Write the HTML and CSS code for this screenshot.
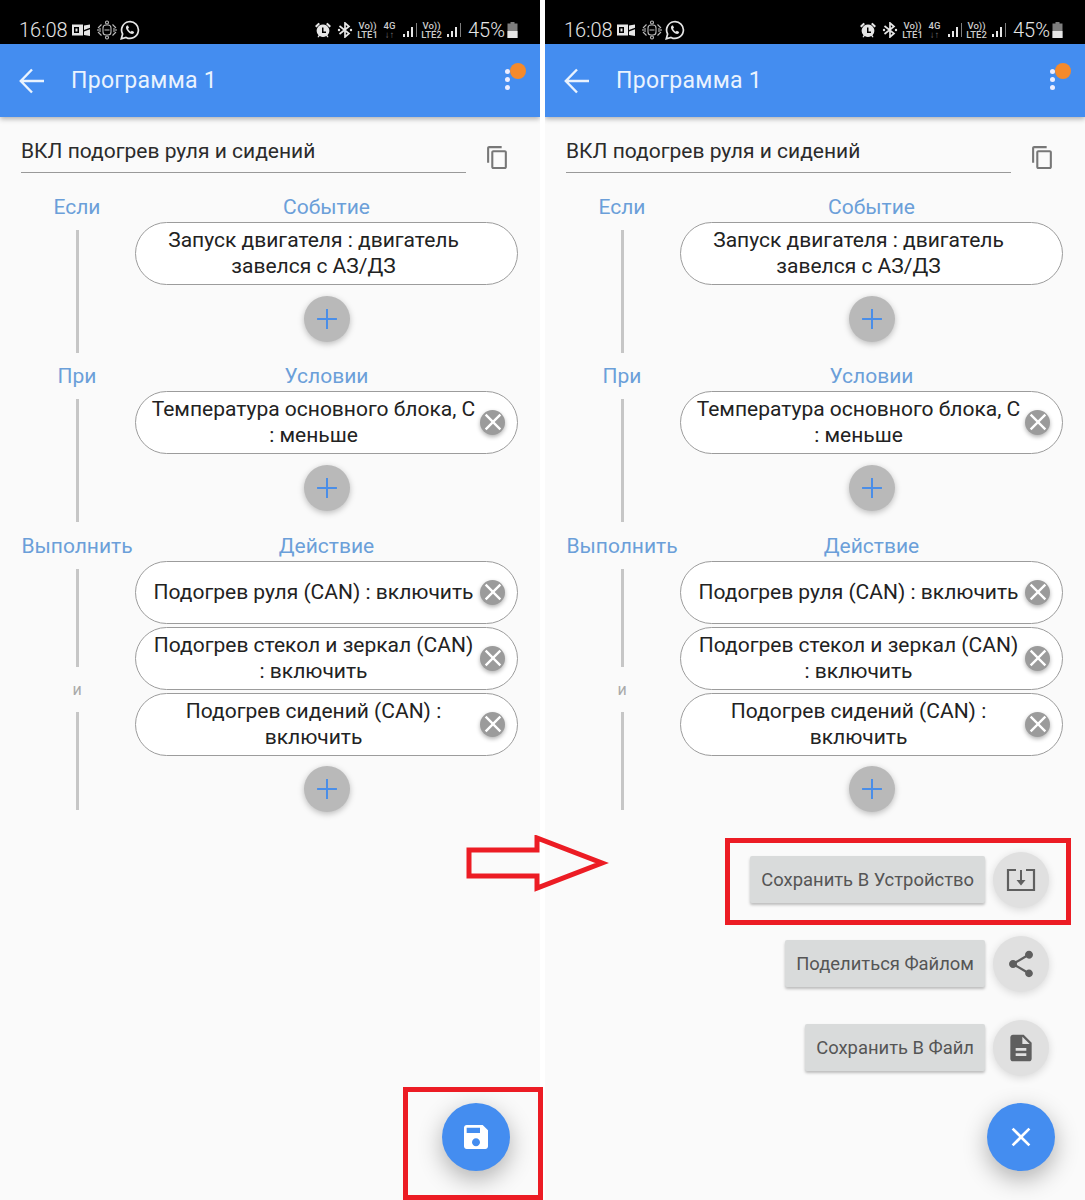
FILE: index.html
```html
<!DOCTYPE html>
<html lang="ru">
<head>
    <meta charset="UTF-8">
    <title>Программа 1</title>
    <link rel="stylesheet" href="styles.css">
</head>
<body>
    <svg class="sprite" aria-hidden="true">
        <symbol id="i-back" viewBox="0 0 26 26"><path d="M25 13H2M13 1.500 1.800 13 13 24.500" fill="none" stroke="currentColor" stroke-width="2.400"/></symbol>
        <symbol id="i-copy" viewBox="0 0 24 24"><path d="M16 1H4c-1.100 0-2 .9-2 2v14h2V3h12V1zm3 4H8c-1.100 0-2 .9-2 2v14c0 1.100.9 2 2 2h11c1.100 0 2-.9 2-2V7c0-1.100-.9-2-2-2zm0 16H8V7h11v14z"/></symbol>
        <symbol id="i-add" viewBox="0 0 24 24"><path d="M19 12.700h-6.300V19h-1.400v-6.300H5v-1.400h6.300V5h1.400v6.300H19z"/></symbol>
        <symbol id="i-close" viewBox="0 0 24 24"><path d="M19 6.410 17.590 5 12 10.590 6.410 5 5 6.410 10.590 12 5 17.590 6.410 19 12 13.410 17.590 19 19 17.590 13.410 12z"/></symbol>
        <symbol id="i-save" viewBox="0 0 24 24"><path d="M17 3H5c-1.110 0-2 .9-2 2v14c0 1.100.89 2 2 2h14c1.100 0 2-.9 2-2V7l-4-4zm-5 16c-1.660 0-3-1.340-3-3s1.340-3 3-3 3 1.340 3 3-1.340 3-3 3zm3-10H5V5h10v4z"/></symbol>
        <symbol id="i-share" viewBox="0 0 24 24"><path d="M18 16.080c-.76 0-1.440.3-1.960.77L8.910 12.700c.05-.23.09-.46.09-.7s-.04-.47-.09-.7l7.050-4.110c.54.5 1.250.81 2.040.81 1.660 0 3-1.340 3-3s-1.340-3-3-3-3 1.340-3 3c0 .24.04.47.09.7L8.040 9.810C7.500 9.310 6.790 9 6 9c-1.660 0-3 1.340-3 3s1.340 3 3 3c.79 0 1.500-.31 2.040-.81l7.120 4.160c-.05.21-.08.43-.08.65 0 1.610 1.310 2.920 2.920 2.920 1.610 0 2.920-1.310 2.920-2.920s-1.310-2.920-2.920-2.920z"/></symbol>
        <symbol id="i-file" viewBox="0 0 24 24"><path d="M14 2H6c-1.100 0-1.990.9-1.990 2L4 20c0 1.100.89 2 1.990 2H18c1.100 0 2-.9 2-2V8l-6-6zm2 16H8v-2h8v2zm0-4H8v-2h8v2zm-3-5V3.500L18.500 9H13z"/></symbol>
        <symbol id="i-device" viewBox="0 0 30 24"><path d="M10 2H2v20h26V2h-8" fill="none" stroke="currentColor" stroke-width="2.200"/><path d="M15 2v12" fill="none" stroke="currentColor" stroke-width="2"/><path d="M10.500 12h9l-4.500 5.500z"/></symbol>
        <symbol id="i-mail" viewBox="0 0 18 16"><path d="M0 2.500h11v11H0zM2 5v6h5V5z" fill-rule="evenodd"/><path d="M3.500 6.500h2v3h-2zM12 3.500l6-1v3.300l-6 2.300zM12 9.500l6-2.200V14l-6-1z"/></symbol>
        <symbol id="i-gear" viewBox="0 0 20 20"><g fill="none" stroke="currentColor" stroke-width="1.100"><rect x="6" y="5" width="8" height="10" rx="3"/><circle cx="10" cy="2.500" r="1.500"/><circle cx="10" cy="17.500" r="1.500"/><path d="M4.500 4.500 1 8M15.500 4.500 19 8M4.500 15.500 1 12M15.500 15.500 19 12M3 8v4M17 8v4M1 9v2M19 9v2M7.500 10h5"/></g></symbol>
        <symbol id="i-chat" viewBox="0 0 20 20"><path d="M1.300 18.700 2.600 14A8.400 8.400 0 1 1 6 17.400z" fill="none" stroke="currentColor" stroke-width="1.700"/><path d="M7 5.500c-1.500 1-1.500 3 .5 5.500s4.500 3.500 6 2.500l.7-1.500-2.400-1.300-1 1C9.500 11.200 8.700 10.300 8 8.800l1-1L8 5.500z"/></symbol>
        <symbol id="i-alarm" viewBox="0 0 16 16"><path d="M0 4 3.500 .8 5 2 1.500 5.500zM16 4 12.500 .8 11 2l3.500 3.500z"/><path d="M8 2.500a6.300 6.300 0 0 0-4.500 10.700L2.500 15l1 .6 1.200-1.500a6.300 6.300 0 0 0 6.600 0l1.200 1.500 1-.6-1-1.800A6.300 6.300 0 0 0 8 2.500zm3 8.500H7V5.500h1.500V9.500H11z" fill-rule="evenodd"/></symbol>
        <symbol id="i-bt" viewBox="0 0 16 16"><path d="M2.500 4 12 11.500 8 15V1l4 3.500L2.500 12" fill="none" stroke="currentColor" stroke-width="1.700"/><circle cx="2" cy="8" r="1.200"/><circle cx="14" cy="8" r="1.200"/></symbol>
        <symbol id="i-signal" viewBox="0 0 16 14"><path d="M1 11h2v3H1zM5 8h2v6H5zM9 4h2v10H9z"/><path d="M14 0h1v14h-1z" opacity=".55"/></symbol>
        <symbol id="i-battery" viewBox="0 0 11 16"><path d="M3.500 0h4v1.500h3V16H.5V1.500h3z" opacity=".55"/><path d="M.5 9h10v7H.5z"/></symbol>
    </svg>

    <div class="screens">
        <!-- левый экран -->
        <section class="phone">
            <div class="status-bar">
                <div class="status-left">
                    <span class="status-time">16:08</span>
                    <svg class="st-mail"><use href="#i-mail"/></svg>
                    <svg class="st-gear"><use href="#i-gear"/></svg>
                    <svg class="st-chat"><use href="#i-chat"/></svg>
                </div>
                <div class="status-right">
                    <svg class="st-alarm"><use href="#i-alarm"/></svg>
                    <svg class="st-bt"><use href="#i-bt"/></svg>
                    <span class="net net-1">Vo))<br>LTE1</span>
                    <span class="net net-4g">4G<br><i>↓↑</i></span>
                    <svg class="st-signal"><use href="#i-signal"/></svg>
                    <span class="net net-2">Vo))<br>LTE2</span>
                    <svg class="st-signal st-signal-last"><use href="#i-signal"/></svg>
                    <span class="status-battery">45%</span>
                    <svg class="st-battery"><use href="#i-battery"/></svg>
                </div>
            </div>
            <header class="app-bar">
                <svg class="back-icon"><use href="#i-back"/></svg>
                <h1 class="app-title">Программа 1</h1>
                <div class="more">
                    <span class="more-dot"></span><span class="more-dot"></span><span class="more-dot"></span>
                    <span class="more-badge"></span>
                </div>
            </header>
            <main class="content">
                <div class="name-row">
                    <div class="name-field">ВКЛ подогрев руля и сидений</div>
                    <svg class="copy-icon"><use href="#i-copy"/></svg>
                </div>

                <div class="block">
                    <div class="side">
                        <div class="caption">Если</div>
                        <div class="side-line"></div>
                    </div>
                    <div class="rules">
                        <div class="caption">Событие</div>
                        <div class="pill"><span class="pill-text">Запуск двигателя : двигатель завелся с АЗ/ДЗ</span></div>
                        <button class="add-btn"><svg><use href="#i-add"/></svg></button>
                    </div>
                </div>

                <div class="block">
                    <div class="side">
                        <div class="caption">При</div>
                        <div class="side-line"></div>
                    </div>
                    <div class="rules">
                        <div class="caption">Условии</div>
                        <div class="pill"><span class="pill-text">Температура основного блока, С : меньше</span><span class="pill-close"><svg><use href="#i-close"/></svg></span></div>
                        <button class="add-btn"><svg><use href="#i-add"/></svg></button>
                    </div>
                </div>

                <div class="block block-last">
                    <div class="side">
                        <div class="caption">Выполнить</div>
                        <div class="side-line side-line-short"></div>
                        <div class="side-and">и</div>
                        <div class="side-line side-line-short"></div>
                    </div>
                    <div class="rules">
                        <div class="caption">Действие</div>
                        <div class="pill"><span class="pill-text">Подогрев руля (CAN) : включить</span><span class="pill-close"><svg><use href="#i-close"/></svg></span></div>
                        <div class="pill"><span class="pill-text">Подогрев стекол и зеркал (CAN) : включить</span><span class="pill-close"><svg><use href="#i-close"/></svg></span></div>
                        <div class="pill"><span class="pill-text">Подогрев сидений (CAN) : включить</span><span class="pill-close"><svg><use href="#i-close"/></svg></span></div>
                        <button class="add-btn"><svg><use href="#i-add"/></svg></button>
                    </div>
                </div>
            </main>
            <div class="fab-menu">
                <button class="fab"><svg><use href="#i-save"/></svg></button>
            </div>
        </section>

        <!-- правый экран -->
        <section class="phone">
            <div class="status-bar">
                <div class="status-left">
                    <span class="status-time">16:08</span>
                    <svg class="st-mail"><use href="#i-mail"/></svg>
                    <svg class="st-gear"><use href="#i-gear"/></svg>
                    <svg class="st-chat"><use href="#i-chat"/></svg>
                </div>
                <div class="status-right">
                    <svg class="st-alarm"><use href="#i-alarm"/></svg>
                    <svg class="st-bt"><use href="#i-bt"/></svg>
                    <span class="net net-1">Vo))<br>LTE1</span>
                    <span class="net net-4g">4G<br><i>↓↑</i></span>
                    <svg class="st-signal"><use href="#i-signal"/></svg>
                    <span class="net net-2">Vo))<br>LTE2</span>
                    <svg class="st-signal st-signal-last"><use href="#i-signal"/></svg>
                    <span class="status-battery">45%</span>
                    <svg class="st-battery"><use href="#i-battery"/></svg>
                </div>
            </div>
            <header class="app-bar">
                <svg class="back-icon"><use href="#i-back"/></svg>
                <h1 class="app-title">Программа 1</h1>
                <div class="more">
                    <span class="more-dot"></span><span class="more-dot"></span><span class="more-dot"></span>
                    <span class="more-badge"></span>
                </div>
            </header>
            <main class="content">
                <div class="name-row">
                    <div class="name-field">ВКЛ подогрев руля и сидений</div>
                    <svg class="copy-icon"><use href="#i-copy"/></svg>
                </div>

                <div class="block">
                    <div class="side">
                        <div class="caption">Если</div>
                        <div class="side-line"></div>
                    </div>
                    <div class="rules">
                        <div class="caption">Событие</div>
                        <div class="pill"><span class="pill-text">Запуск двигателя : двигатель завелся с АЗ/ДЗ</span></div>
                        <button class="add-btn"><svg><use href="#i-add"/></svg></button>
                    </div>
                </div>

                <div class="block">
                    <div class="side">
                        <div class="caption">При</div>
                        <div class="side-line"></div>
                    </div>
                    <div class="rules">
                        <div class="caption">Условии</div>
                        <div class="pill"><span class="pill-text">Температура основного блока, С : меньше</span><span class="pill-close"><svg><use href="#i-close"/></svg></span></div>
                        <button class="add-btn"><svg><use href="#i-add"/></svg></button>
                    </div>
                </div>

                <div class="block block-last">
                    <div class="side">
                        <div class="caption">Выполнить</div>
                        <div class="side-line side-line-short"></div>
                        <div class="side-and">и</div>
                        <div class="side-line side-line-short"></div>
                    </div>
                    <div class="rules">
                        <div class="caption">Действие</div>
                        <div class="pill"><span class="pill-text">Подогрев руля (CAN) : включить</span><span class="pill-close"><svg><use href="#i-close"/></svg></span></div>
                        <div class="pill"><span class="pill-text">Подогрев стекол и зеркал (CAN) : включить</span><span class="pill-close"><svg><use href="#i-close"/></svg></span></div>
                        <div class="pill"><span class="pill-text">Подогрев сидений (CAN) : включить</span><span class="pill-close"><svg><use href="#i-close"/></svg></span></div>
                        <button class="add-btn"><svg><use href="#i-add"/></svg></button>
                    </div>
                </div>
            </main>
            <div class="fab-menu">
                <div class="fab-row">
                    <span class="fab-label">Сохранить В Устройство</span>
                    <button class="mini-fab"><svg class="device-icon"><use href="#i-device"/></svg></button>
                </div>
                <div class="fab-row">
                    <span class="fab-label">Поделиться Файлом</span>
                    <button class="mini-fab"><svg><use href="#i-share"/></svg></button>
                </div>
                <div class="fab-row">
                    <span class="fab-label">Сохранить В Файл</span>
                    <button class="mini-fab"><svg><use href="#i-file"/></svg></button>
                </div>
                <button class="fab"><svg><use href="#i-close"/></svg></button>
            </div>
        </section>

        <!-- красные пометки поверх скриншотов -->
        <div class="mark mark-save"></div>
        <div class="mark mark-device"></div>
        <svg class="mark-arrow" viewBox="0 0 150 60"><path d="M4 15H72V3L137 28 72 53V41H4z"/></svg>
    </div>
</body>
</html>
```

FILE: styles.css
```css
* { box-sizing: border-box; }
html, body { margin: 0; height: 1200px; overflow: hidden; background-color: #fff; }
body { font-family: Roboto, "Noto Sans", sans-serif; color: #2b2b2b; }
button { padding: 0; border: none; font: inherit; }
.sprite { display: none; }

.screens { position: relative; display: flex; gap: 5px; width: 1085px; height: 1200px; }
.phone { position: relative; width: 540px; height: 1200px; background-color: #fafafa; overflow: hidden; }

/* status bar */
.status-bar { display: flex; justify-content: space-between; align-items: center; height: 44px; padding: 16px 22px 0 19px; background-color: #000; color: #e6e6e6; }
.status-bar svg { display: block; fill: currentColor; flex: none; }
.status-left, .status-right { display: flex; align-items: center; }
.status-time { font-size: 20px; font-weight: 300; width: 53px; }
.st-mail { width: 18px; height: 16px; margin-right: 7px; }
.st-gear { width: 20px; height: 20px; margin-right: 3px; color: #bbb; }
.st-chat { width: 20px; height: 20px; }
.st-alarm { width: 16px; height: 16px; margin-right: 6px; }
.st-bt { width: 16px; height: 16px; margin-right: 4px; }
.net { font-size: 9.500px; line-height: 9px; text-align: center; width: 21px; font-weight: 500; color: #ccc; }
.net-1 { margin-right: 5px; }
.net-2 { margin-right: 4px; }
.net-4g { width: 13px; margin-right: 6px; }
.net-4g i { font-style: normal; color: #777; }
.st-signal { width: 16px; height: 14px; margin-right: 3px; }
.st-signal-last { margin-right: 6px; }
.status-battery { font-size: 20px; font-weight: 300; margin-right: 2px; }
.st-battery { width: 11px; height: 16px; }

/* app bar */
.app-bar { position: relative; z-index: 1; display: flex; align-items: center; height: 73px; padding-left: 19px; background-color: #448df0; color: #eaf3fe; box-shadow: 0 2px 5px rgba(0, 0, 0, 0.3); }
.back-icon { width: 26px; height: 26px; margin-right: 26px; flex: none; }
.app-title { margin: 0; font-size: 23px; font-weight: 400; letter-spacing: 0.3px; }
.more { position: absolute; left: 505px; top: 25px; display: flex; flex-direction: column; gap: 3px; }
.more-dot { width: 5px; height: 5px; border-radius: 50%; background-color: #eef; }
.more-badge { position: absolute; left: 5px; top: -6px; width: 16px; height: 16px; border-radius: 50%; background-color: #f58a2c; }

/* form */
.content { padding: 0 22px 0 21px; }
.name-row { display: flex; align-items: flex-start; height: 75px; padding-top: 20px; }
.name-field { width: 445px; height: 36px; font-size: 21px; line-height: 29px; border-bottom: 1.500px solid #999; }
.copy-icon { width: 25px; height: 25px; margin: 8px 0 0 19px; fill: #777; }

.block { display: flex; gap: 2px; padding-bottom: 19px; }
.block-last { margin-top: 1px; padding-bottom: 0; }
.side { display: flex; flex-direction: column; align-items: center; width: 112px; flex: none; }
.side-line { flex: 1; width: 3px; margin: 8px 0 -11px; background-color: #c6c6c6; }
.side-line-short { flex: none; height: 98px; margin: 0; }
.caption + .side-line-short { margin-top: 8px; }
.side-and { height: 45px; font-size: 16px; line-height: 46px; color: #aaa; }
.rules { display: flex; flex-direction: column; align-items: center; gap: 3px; width: 383px; }
.caption { height: 30px; font-size: 21px; line-height: 30px; color: #6b9fd9; white-space: nowrap; }
.rules .caption { margin-bottom: -3px; }

.pill { position: relative; display: flex; align-items: center; justify-content: center; width: 383px; height: 63px; padding: 0 41px 0 15px; background-color: #fff; border: 1.500px solid #9c9c9c; border-radius: 32px; font-size: 21px; line-height: 25.500px; text-align: center; color: #222; }
.pill-close { position: absolute; right: 12px; top: 17.500px; display: flex; align-items: center; justify-content: center; width: 25px; height: 25px; border-radius: 50%; background-color: #9b9b9b; box-shadow: 0 2px 4px rgba(0, 0, 0, 0.3); }
.pill-close svg { width: 28px; height: 28px; flex: none; fill: #fff; }
.add-btn { display: flex; align-items: center; justify-content: center; width: 46px; height: 46px; margin-top: 8px; border-radius: 50%; background-color: #b9b9b9; box-shadow: 0 2px 6px rgba(0, 0, 0, 0.25); }
.block-last .add-btn { margin-top: 7px; }
.add-btn svg { width: 34px; height: 34px; fill: #4a8ee8; }

/* floating buttons */
.fab-menu { position: absolute; right: 30px; bottom: 29px; display: flex; flex-direction: column; align-items: flex-end; gap: 28px; }
.fab-row { display: flex; align-items: center; gap: 8px; padding-right: 6px; }
.fab-label { height: 47px; margin-bottom: 2px; padding: 0 11px; background-color: #d9dbdb; border-radius: 2px; font-size: 18.400px; line-height: 48px; color: #555; box-shadow: 0 2px 3px rgba(0, 0, 0, 0.25); white-space: nowrap; }
.mini-fab { display: flex; align-items: center; justify-content: center; width: 56px; height: 56px; border-radius: 50%; background-color: #e0e0e0; box-shadow: 0 2px 8px rgba(0, 0, 0, 0.14); color: #5f5f5f; }
.mini-fab svg { width: 32px; height: 32px; fill: #5f5f5f; }
.mini-fab .device-icon { width: 30px; height: 24px; }
.fab { display: flex; align-items: center; justify-content: center; width: 68px; height: 68px; margin-top: -1px; border-radius: 50%; background-color: #448df0; box-shadow: 0 8px 24px rgba(0, 0, 0, 0.3); }
.fab svg { width: 32px; height: 32px; fill: #fff; }

/* annotations */
.mark { position: absolute; border: 5px solid #ec1c24; }
.mark-save { left: 403px; top: 1087px; width: 140px; height: 113px; }
.mark-device { left: 725px; top: 838px; width: 346px; height: 87px; }
.mark-arrow { position: absolute; left: 465px; top: 835px; width: 150px; height: 60px; fill: none; stroke: #ec1c24; stroke-width: 5px; }
```
